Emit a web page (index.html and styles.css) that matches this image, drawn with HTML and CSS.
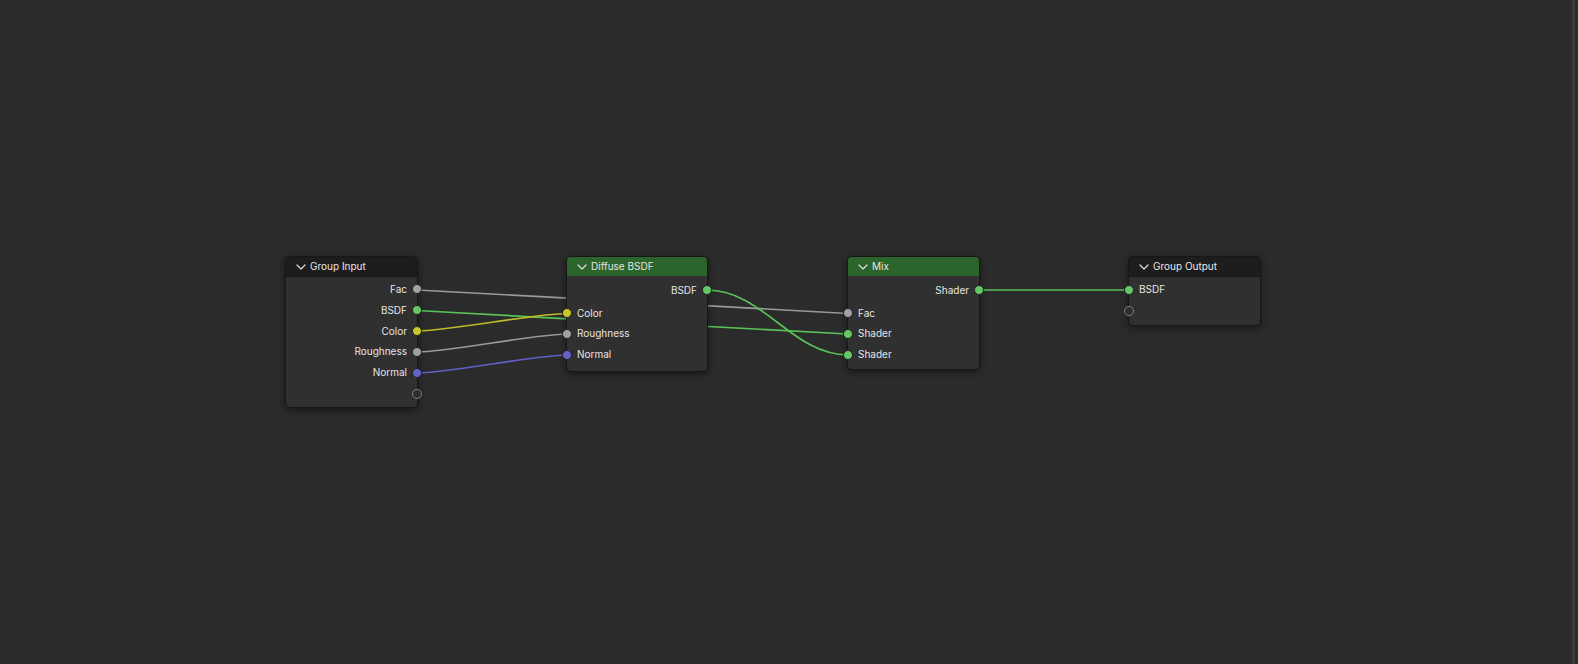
FILE: index.html
```html
<!DOCTYPE html>
<html lang="en">
<head>
<meta charset="utf-8">
<title>Node Editor</title>
<link rel="stylesheet" href="styles.css">
</head>
<body>
<svg width="0" height="0" class="defs" aria-hidden="true">
  <symbol id="chevron" viewBox="0 0 10 6"><path d="M1 1 L5 5 L9 1" fill="none" stroke="#dcdcdc" stroke-width="1.2" stroke-linecap="round" stroke-linejoin="round"/></symbol>
</svg>
<main class="editor">
  <svg class="links" aria-hidden="true">
    <path class="link grey" d="M417 290 C460 291 805 312 848 313.5"/>
    <path class="link green" d="M417 310.5 C460 312 805 333 848 334"/>
    <path class="link yellow" d="M417 331 C448 331 536 313.5 567 313.5"/>
    <path class="link grey" d="M417 352 C448 352 536 334 567 334"/>
    <path class="link blue" d="M417 373 C448 373 536 355 567 355"/>
    <path class="link green" d="M707 290 C763 290 792 355 848 355"/>
    <path class="link green" d="M979 290 L1129 290"/>
  </svg>

  <section class="node group group-input">
    <header class="title"><button class="toggle" aria-label="Collapse Group Input"><svg><use href="#chevron"/></svg></button><h2>Group Input</h2></header>
    <ul class="sockets six">
      <li class="out grey"><span>Fac</span><i></i></li>
      <li class="out green"><span>BSDF</span><i></i></li>
      <li class="out yellow"><span>Color</span><i></i></li>
      <li class="out grey"><span>Roughness</span><i></i></li>
      <li class="out blue"><span>Normal</span><i></i></li>
      <li class="out empty"><i></i></li>
    </ul>
  </section>

  <section class="node shader diffuse">
    <header class="title"><button class="toggle" aria-label="Collapse Diffuse BSDF"><svg><use href="#chevron"/></svg></button><h2>Diffuse BSDF</h2></header>
    <ul class="sockets">
      <li class="out green"><span>BSDF</span><i></i></li>
    </ul>
    <ul class="sockets inputs">
      <li class="in yellow"><i></i><span>Color</span></li>
      <li class="in grey"><i></i><span>Roughness</span></li>
      <li class="in blue"><i></i><span>Normal</span></li>
    </ul>
  </section>

  <section class="node shader mix">
    <header class="title"><button class="toggle" aria-label="Collapse Mix"><svg><use href="#chevron"/></svg></button><h2>Mix</h2></header>
    <ul class="sockets">
      <li class="out green"><span>Shader</span><i></i></li>
    </ul>
    <ul class="sockets inputs">
      <li class="in grey"><i></i><span>Fac</span></li>
      <li class="in green"><i></i><span>Shader</span></li>
      <li class="in green"><i></i><span>Shader</span></li>
    </ul>
  </section>

  <section class="node group group-output">
    <header class="title"><button class="toggle" aria-label="Collapse Group Output"><svg><use href="#chevron"/></svg></button><h2>Group Output</h2></header>
    <ul class="sockets">
      <li class="in green"><i></i><span>BSDF</span></li>
      <li class="in empty"><i></i></li>
    </ul>
  </section>
</main>
<div class="edge"></div>
</body>
</html>
```

FILE: styles.css
```css
* { box-sizing: border-box; }
body {
  margin: 0;
  min-height: 100vh;
  display: flex;
  background: #2b2b2b;
  color: #e6e6e6;
  font: 10px/18px Inter, "Liberation Sans", Arial, sans-serif;
}
.defs { position: absolute; }
.editor { position: relative; flex: 1; overflow: hidden; }
.edge { width: 6px; background: #3a3a3a; border-right: 3px solid #2b2b2b; }

.links { position: absolute; inset: 0; width: 100%; height: 100%; }
.link { fill: none; stroke: var(--wire); stroke-width: 1.7; }

.grey { --dot: #a1a1a1; --wire: #999999; }
.green { --dot: #63c763; --wire: #58c258; }
.yellow { --dot: #c7c729; --wire: #c0bc26; }
.blue { --dot: #6363c7; --wire: #6060c6; }

.node {
  position: absolute;
  width: 131px;
  padding-bottom: 4px;
  background: #303030;
  border-radius: 4px;
  box-shadow: 0 0 0 1px #171717, 0 2px 7px 1px rgba(0, 0, 0, 0.5);
}
.group-input { left: 286px; top: 257px; padding-bottom: 3px; }
.diffuse { left: 567px; top: 257px; width: 140px; padding-bottom: 6px; }
.mix { left: 848px; top: 257px; }
.group-output { left: 1129px; top: 257px; }

.title {
  display: flex;
  align-items: center;
  height: 19px;
  padding-left: 10px;
  gap: 4px;
  border-radius: 4px 4px 0 0;
  background: #1d1d1d;
}
.group .title { height: 20px; border-bottom: 1px solid #181818; }
.shader .title { background: #2b652b; }
.title h2 { margin: 0; padding-bottom: 2px; font-size: 10px; font-weight: 400; line-height: 18px; }
.toggle { display: flex; padding: 0; border: 0; background: none; }
.toggle svg { width: 10px; height: 6px; }

.sockets { display: grid; grid-auto-rows: 21px; margin: 0; padding: 2px 0 0; list-style: none; }
.shader .sockets { padding-top: 4px; grid-auto-rows: 20px; }
.six { height: 127px; grid-auto-rows: 1fr; }
.shader .inputs { height: 65px; grid-auto-rows: 1fr; padding-top: 3px; }
.sockets li { position: relative; display: flex; align-items: center; padding: 0 10px; }
.sockets span { padding-bottom: 1px; }
.out { justify-content: flex-end; }
.sockets i {
  position: absolute;
  width: 10px;
  height: 10px;
  border: 1px solid #242424;
  border-radius: 50%;
  background: var(--dot);
}
.out i { right: -5px; }
.in i { left: -5px; }
.sockets .empty i { border-color: #808080; background: #2e2e2e; }
```
